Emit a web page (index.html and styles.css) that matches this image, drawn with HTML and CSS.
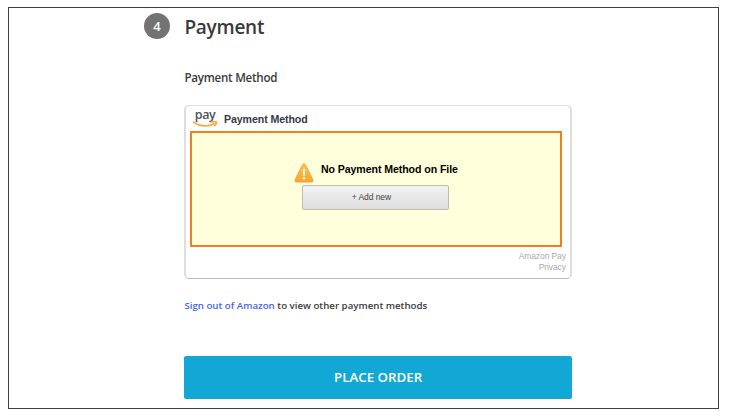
FILE: index.html
```html
<!DOCTYPE html>
<html lang="en">
<head>
<meta charset="utf-8">
<title>Payment</title>
<link rel="stylesheet" href="styles.css">
</head>
<body>
<main class="frame">
  <div class="step">4</div>
  <section class="content">
    <h1 class="title">Payment</h1>
    <h2 class="subtitle">Payment Method</h2>
    <div class="widget">
      <div class="widget-head">
        <div class="logo">
          <span class="logo-text">pay</span>
          <svg class="smile" width="24" height="6" viewBox="0 0 24 6" fill="none" stroke="#f7a63a" stroke-width="1.700" stroke-linecap="round">
            <path d="M.8 1.100C6.500 5.700 15 6.200 21 2.800M18.800.9C20.500.6 22 .5 23 .8c.3 1-.1 2.500-1.100 3.800"/>
          </svg>
        </div>
        <span class="widget-title">Payment Method</span>
      </div>
      <div class="notice">
        <div class="notice-row">
          <svg class="warn" width="20" height="20" viewBox="0 0 20 20">
            <defs>
              <linearGradient id="amber" x1="0" y1="0" x2="0" y2="1">
                <stop offset="0" stop-color="#ffc552"/>
                <stop offset="1" stop-color="#f9a42b"/>
              </linearGradient>
            </defs>
            <path d="M8.700 1.300Q10 0 11.300 1.300L18.900 16.700Q19.600 19 17.800 19.100H2.200Q.4 19 1.100 16.700Z" fill="url(#amber)" stroke="#e9a03c" stroke-width=".8"/>
            <path d="M8.800 6h2.400l-.5 6.800H9.300Z" fill="#fff"/>
            <circle cx="10" cy="15.300" r="1.300" fill="#fff"/>
          </svg>
          <span class="notice-text">No Payment Method on File</span>
        </div>
        <button class="add">+ Add new</button>
      </div>
      <div class="links"><span>Amazon Pay</span><span>Privacy</span></div>
    </div>
    <p class="signout"><a>Sign out of Amazon</a> to view other payment methods</p>
    <button class="order">PLACE ORDER</button>
  </section>
</main>
</body>
</html>
```

FILE: styles.css
```css
* { box-sizing: border-box; }
body { margin: 0; background: #fff; color: #3a3a3a; font-family: "Open Sans", sans-serif; }
.frame {
  display: flex; align-items: flex-start; gap: 14.400px;
  width: 711px; height: 402px; margin: 7px 0 0 8px; padding: 5px 0 0 135px;
  border: 1px solid #404040;
}
.step {
  width: 26px; height: 26px; border-radius: 50%;
  background: #737373; color: #fff; font-size: 13px; font-weight: 600;
  line-height: 26px; text-align: center;
}
.content { width: 387.500px; }
.title { margin: 0; font-size: 19px; line-height: 28px; font-weight: 600; letter-spacing: -.25px; }
.subtitle { margin: 28px 0 0; font-size: 11.600px; line-height: 18px; font-weight: 600; letter-spacing: -.25px; }
.widget {
  height: 174px; margin-top: 18px; padding: 1px 5px 0;
  border: solid #ddd; border-width: 1px 2px; border-bottom: 1px solid #bbb; border-radius: 5px;
}
.widget-head { display: flex; height: 24px; gap: 7px; padding-left: 1.600px; }
.logo { width: 24px; height: 20px; display: flex; flex-direction: column; align-items: center; }
.logo-text { font-size: 12.500px; line-height: 15px; height: 14px; color: #4b535c; font-weight: 600; letter-spacing: -.5px; }
.smile { display: block; margin-top: 0; flex: none; }
.widget-title { font: bold 10.600px/25px "Liberation Sans", sans-serif; letter-spacing: -.08px; color: #333b45; }
.notice {
  width: 372px; height: 116px; margin-left: -1px; padding-top: 30px;
  display: flex; flex-direction: column; align-items: center;
  background: #ffffdb; border: 2px solid #ed8121;
}
.notice-row { display: flex; gap: 7px; height: 22px; margin-left: -1px; }
.warn { flex: none; }
.notice-text { font: bold 10.600px/13px "Liberation Sans", sans-serif; letter-spacing: -.08px; color: #000; white-space: nowrap; }
.add {
  width: 147px; height: 25px; margin-left: -2px; padding: 0 8px 1px 0; border: 1px solid #bcbcb4; border-radius: 2px;
  background: linear-gradient(#f3f3f3, #dedede); color: #444; font: 8.500px "Liberation Sans", sans-serif; letter-spacing: -.05px;
}
.links {
  display: flex; flex-direction: column; align-items: flex-end; padding: 4px 0 0; margin-right: -1px;
  font: 8.500px/11px "Liberation Sans", sans-serif; letter-spacing: -.1px; color: #aaa;
}
.signout { margin: 18px 0 0; font-size: 9.700px; line-height: 18px; font-weight: 600; }
.signout a { color: #4663ee; }
.order {
  display: block; width: 387.500px; height: 43px; margin-top: 41px; padding: 0 0 1px;
  border: 0; border-radius: 2px; background: #11a8d5; color: #fff;
  font: 600 13.300px "Open Sans", sans-serif;
}
```
